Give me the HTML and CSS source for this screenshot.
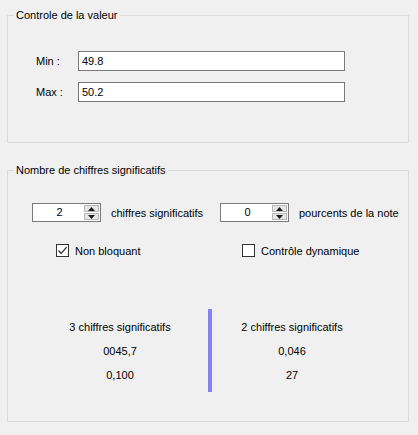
FILE: index.html
```html
<!DOCTYPE html>
<html lang="fr">
<head>
<meta charset="utf-8">
<link rel="stylesheet" href="styles.css">
</head>
<body>
<div class="page">
  <div class="group g1">
    <span class="gtitle">Controle de la valeur</span>
    <div class="row">
      <span class="lbl">Min :</span>
      <div class="tb">49.8</div>
    </div>
    <div class="row">
      <span class="lbl">Max :</span>
      <div class="tb">50.2</div>
    </div>
  </div>

  <div class="group g2">
    <span class="gtitle">Nombre de chiffres significatifs</span>
    <div class="cols">
      <div class="col">
        <div class="spinrow">
          <div class="spin">
            <span class="val">2</span>
            <div class="btns">
              <span class="btn"><svg width="7" height="4" viewBox="0 0 7 4"><path d="M3.5 0 L7 4 L0 4 Z" fill="#1a1a1a"/></svg></span>
              <span class="btn"><svg width="7" height="4" viewBox="0 0 7 4"><path d="M0 0 L7 0 L3.5 4 Z" fill="#1a1a1a"/></svg></span>
            </div>
          </div>
          <span class="txt">chiffres significatifs</span>
        </div>
        <div class="chkrow c1">
          <span class="chk"><svg width="11" height="11" viewBox="0 0 11 11"><path d="M1.5 5.5 L4.2 8.3 L9.6 2.2" fill="none" stroke="#222" stroke-width="1.2"/></svg></span>
          <span class="txt">Non bloquant</span>
        </div>
      </div>
      <div class="col">
        <div class="spinrow">
          <div class="spin">
            <span class="val">0</span>
            <div class="btns">
              <span class="btn"><svg width="7" height="4" viewBox="0 0 7 4"><path d="M3.5 0 L7 4 L0 4 Z" fill="#1a1a1a"/></svg></span>
              <span class="btn"><svg width="7" height="4" viewBox="0 0 7 4"><path d="M0 0 L7 0 L3.5 4 Z" fill="#1a1a1a"/></svg></span>
            </div>
          </div>
          <span class="txt">pourcents de la note</span>
        </div>
        <div class="chkrow c2">
          <span class="chk"></span>
          <span class="txt">Contrôle dynamique</span>
        </div>
      </div>
    </div>

    <div class="results">
      <div class="res left">
        <span>3 chiffres significatifs</span>
        <span>0045,7</span>
        <span>0,100</span>
      </div>
      <div class="bar"></div>
      <div class="res right">
        <span>2 chiffres significatifs</span>
        <span>0,046</span>
        <span>27</span>
      </div>
    </div>
  </div>
</div>
</body>
</html>
```

FILE: styles.css
```css
html, body {
  margin: 0;
  padding: 0;
  background: #f0f0f0;
}
body {
  font-family: "Liberation Sans", Arial, sans-serif;
  font-size: 11px;
  color: #000;
  width: 418px;
  height: 435px;
  overflow: hidden;
}
.page {
  padding: 15px 0 0 7px;
  display: flex;
  flex-direction: column;
  gap: 27px;
}
.group {
  position: relative;
  border: 1px solid #dcdcdc;
  box-sizing: border-box;
  width: 402px;
}
.gtitle {
  position: absolute;
  left: 6px;
  top: -8px;
  padding: 0 2px;
  background: #f0f0f0;
  line-height: 15px;
  white-space: nowrap;
}
.g1 {
  height: 128px;
  padding: 35px 0 0 28px;
  display: flex;
  flex-direction: column;
  gap: 11px;
}
.row {
  display: flex;
  align-items: center;
  height: 20px;
}
.lbl {
  width: 42px;
}
.tb {
  box-sizing: border-box;
  width: 267px;
  height: 20px;
  border: 1px solid #7a7a7a;
  background: #fff;
  padding: 0 0 0 3px;
  line-height: 18px;
}
.g2 {
  height: 252px;
  padding: 32px 0 0 24px;
}
.cols {
  display: flex;
}
.col {
  width: 190px;
  display: flex;
  flex-direction: column;
}
.spinrow {
  display: flex;
  align-items: center;
  height: 19px;
  gap: 10px;
}
.spin {
  box-sizing: border-box;
  width: 69px;
  height: 19px;
  border: 1px solid #7a7a7a;
  background: #fff;
  display: flex;
  align-items: stretch;
}
.val {
  flex: 1;
  text-align: center;
  line-height: 17px;
  padding-left: 2px;
}
.btns {
  width: 15px;
  display: flex;
  flex-direction: column;
  padding: 1px 1px 1px 0;
  gap: 1px;
}
.btn {
  flex: 1;
  box-sizing: border-box;
  border: 1px solid #b8b8b8;
  background: #e6e6e6;
  display: flex;
  align-items: center;
  justify-content: center;
}
.btn svg {
  display: block;
}
.chkrow {
  display: flex;
  align-items: center;
  gap: 6px;
  margin-top: 22px;
  height: 13px;
}
.c1 { padding-left: 24px; }
.c2 { padding-left: 22px; }
.chk {
  box-sizing: border-box;
  width: 13px;
  height: 13px;
  border: 1px solid #333;
  background: #fff;
  display: flex;
  align-items: center;
  justify-content: center;
}
.chk svg { display: block; }
.results {
  display: flex;
  margin-top: 52px;
  height: 83px;
}
.res {
  display: flex;
  flex-direction: column;
  align-items: center;
  padding-top: 11px;
  gap: 9px;
  line-height: 15px;
}
.left { width: 176px; }
.right { width: 160px; }
.bar {
  width: 4px;
  background: #8383f5;
}
```
